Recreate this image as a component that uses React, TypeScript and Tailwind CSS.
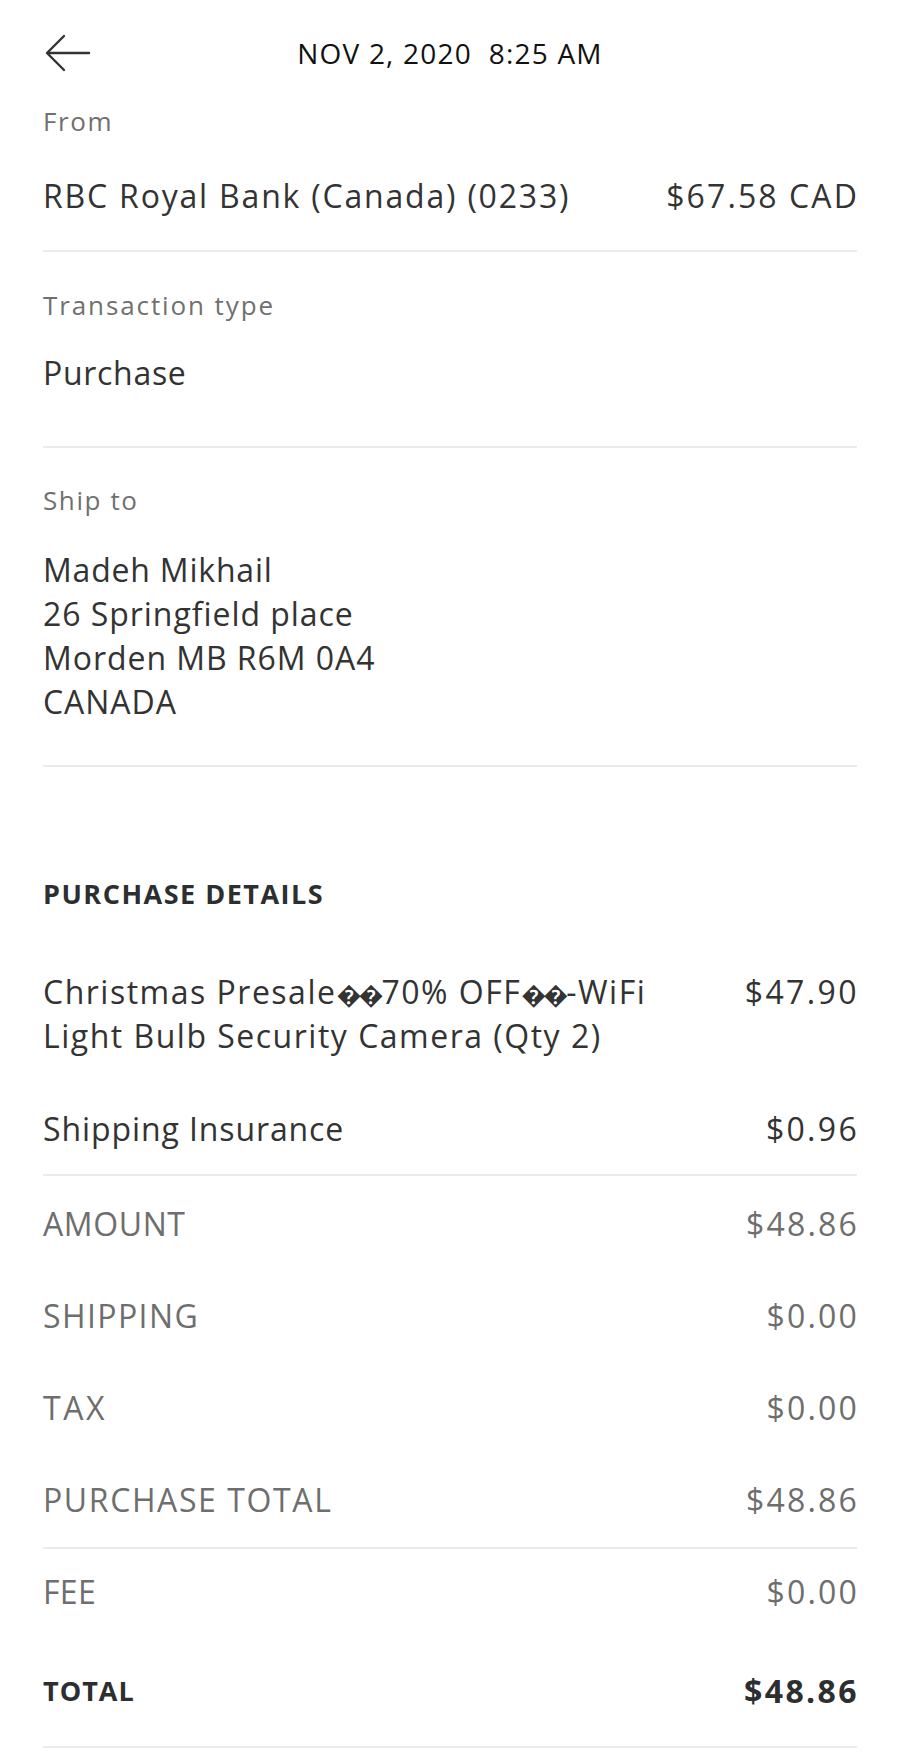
import React from "react";

const font = { fontFamily: '"Open Sans", "DejaVu Sans", sans-serif' };

function Divider({ className = "" }: { className?: string }) {
  return <div className={`h-[2px] w-full bg-[#ebebeb] ${className}`} />;
}

function Label({ children, className = "" }: { children: React.ReactNode; className?: string }) {
  return <div className={`text-[26px] leading-[30px] text-[#707070] ${className}`}>{children}</div>;
}

function SummaryRow({
  label,
  value,
  track = "tracking-[1.4px]",
  className = "",
}: {
  label: string;
  value: string;
  track?: string;
  className?: string;
}) {
  return (
    <div className={`flex flex-row justify-between items-center h-[44px] text-[32px] leading-[44px] text-[#6e6e6e] ${className}`}>
      <span className={track}>{label}</span>
      <span className="tracking-[2.2px] -mr-[2px]">{value}</span>
    </div>
  );
}

// the broken glyphs in the product name are narrower than in our fallback font
function Bad() {
  return <span className="text-[25px] leading-none tracking-[-3px] mr-[1px]">��</span>;
}

export default function App() {
  return (
    <div className="w-[900px] min-h-[1761px] bg-white px-[43px]" style={font}>
      {/* header */}
      <div className="grid grid-cols-[1fr_auto_1fr] items-center h-[106px]">
        <svg width="46" height="38" viewBox="0 0 46 38" fill="none" className="ml-[2px]">
          <path d="M44 19H3M19 2L2 19l17 17" stroke="#333" strokeWidth="2.4" strokeLinecap="round" strokeLinejoin="round" />
        </svg>
        <div className="text-[28px] text-[#111] tracking-[1.2px]">NOV 2, 2020&nbsp; 8:25 AM</div>
        <div />
      </div>

      {/* from */}
      <Label className="tracking-[1.6px]">From</Label>
      <div className="flex flex-row justify-between items-center mt-[38px] text-[32px] leading-[44px] text-[#333]">
        <span className="tracking-[1.8px]">RBC Royal Bank (Canada) (0233)</span>
        <span className="tracking-[2.1px] -mr-[2px]">$67.58 CAD</span>
      </div>
      <Divider className="mt-[32px]" />

      {/* transaction type */}
      <Label className="mt-[38px] tracking-[1.9px]">Transaction type</Label>
      <div className="mt-[31px] text-[32px] leading-[44px] text-[#333] tracking-[0.7px]">Purchase</div>
      <Divider className="mt-[51px]" />

      {/* ship to */}
      <Label className="mt-[37px] tracking-[1.6px]">Ship to</Label>
      <div className="mt-[33px] flex flex-col text-[32px] leading-[44px] text-[#333] tracking-[0.95px]">
        <span className="tracking-[0.8px]">Madeh Mikhail</span>
        <span>26 Springfield place</span>
        <span>Morden MB R6M 0A4</span>
        <span>CANADA</span>
      </div>
      <Divider className="mt-[41px]" />

      {/* purchase details */}
      <div className="mt-[110px] text-[27px] leading-[34px] font-bold text-[#2c2e2f] tracking-[1.5px]">PURCHASE DETAILS</div>
      <div className="mt-[59px] flex flex-row justify-between items-start text-[32px] leading-[44px] text-[#333]">
        <span className="tracking-[1.5px]">
          Christmas Presale<Bad />70% OFF<Bad />-WiFi
          <br />
          Light Bulb Security Camera (Qty 2)
        </span>
        <span className="tracking-[2.4px] -mr-[2px]">$47.90</span>
      </div>
      <div className="mt-[49px] flex flex-row justify-between items-center text-[32px] leading-[44px] text-[#333]">
        <span className="tracking-[0.9px]">Shipping Insurance</span>
        <span className="tracking-[2.3px] -mr-[2px]">$0.96</span>
      </div>
      <Divider className="mt-[23px]" />

      <div className="flex flex-col gap-[48px] mt-[26px]">
        <SummaryRow label="AMOUNT" value="$48.86" track="tracking-[0.6px]" />
        <SummaryRow label="SHIPPING" value="$0.00" />
        <SummaryRow label="TAX" value="$0.00" track="tracking-[2.6px]" />
        <SummaryRow label="PURCHASE TOTAL" value="$48.86" track="tracking-[1.6px]" />
      </div>
      <Divider className="mt-[25px]" />
      <SummaryRow label="FEE" value="$0.00" track="tracking-[0.3px]" className="mt-[21px]" />
      <div className="mt-[55px] flex flex-row justify-between items-center h-[44px] font-bold text-[#2c2e2f]">
        <span className="text-[27px] tracking-[1px]">TOTAL</span>
        <span className="text-[32px] tracking-[2.4px] -mr-[2px]">$48.86</span>
      </div>
      <Divider className="mt-[33px]" />
    </div>
  );
}
